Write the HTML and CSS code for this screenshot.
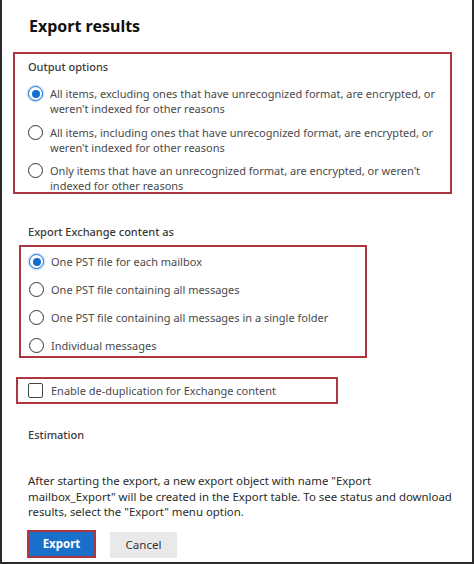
FILE: index.html
```html
<!DOCTYPE html>
<html lang="en">
<head>
<meta charset="utf-8">
<title>Export results</title>
<link rel="stylesheet" href="styles.css">
</head>
<body>
<div class="frame">
  <h1 class="title">Export results</h1>

  <div class="box box-output">
    <div class="group-label">Output options</div>
    <div class="radio-list-wrap">
      <label class="radio-item">
        <span class="radio checked"></span>
        <span class="radio-text">All items, excluding ones that have unrecognized format, are encrypted, or weren't indexed for other reasons</span>
      </label>
      <label class="radio-item">
        <span class="radio"></span>
        <span class="radio-text">All items, including ones that have unrecognized format, are encrypted, or weren't indexed for other reasons</span>
      </label>
      <label class="radio-item">
        <span class="radio"></span>
        <span class="radio-text">Only items that have an unrecognized format, are encrypted, or weren't indexed for other reasons</span>
      </label>
    </div>
  </div>

  <div class="group-label label-exchange">Export Exchange content as</div>
  <div class="box box-exchange">
    <label class="radio-row">
      <span class="radio checked"></span>
      <span class="radio-text">One PST file for each mailbox</span>
    </label>
    <label class="radio-row">
      <span class="radio"></span>
      <span class="radio-text">One PST file containing all messages</span>
    </label>
    <label class="radio-row">
      <span class="radio"></span>
      <span class="radio-text">One PST file containing all messages in a single folder</span>
    </label>
    <label class="radio-row">
      <span class="radio"></span>
      <span class="radio-text">Individual messages</span>
    </label>
  </div>

  <div class="box box-dedup">
    <span class="checkbox"></span>
    <span class="check-text">Enable de-duplication for Exchange content</span>
  </div>

  <div class="group-label label-estimation">Estimation</div>

  <p class="info">After starting the export, a new export object with name "Export mailbox_Export" will be created in the Export table. To see status and download results, select the "Export" menu option.</p>

  <div class="actions">
    <div class="btn-outline"><button class="btn btn-primary">Export</button></div>
    <button class="btn btn-secondary">Cancel</button>
  </div>
</div>
</body>
</html>
```

FILE: styles.css
```css
* { box-sizing: border-box; }

html, body {
  margin: 0;
  padding: 0;
  background: #ffffff;
}

.frame {
  width: 474px;
  height: 564px;
  border-left: 2px solid #2a2a2a;
  border-right: 2px solid #2a2a2a;
  border-bottom: 2px solid #2a2a2a;
  background: #ffffff;
  font-family: "Noto Sans", "Open Sans", sans-serif;
  color: #444444;
  overflow: hidden;
  display: flex;
  flex-direction: column;
}

.title {
  margin: 15px 0 0 27px;
  font-size: 16px;
  line-height: 22px;
  font-weight: 700;
  color: #111111;
}

.box {
  border: 2px solid #ad3640;
}

.box-output {
  margin: 15px 0 0 11px;
  width: 439px;
  height: 142px;
  padding: 5px 0 0 13px;
}

.group-label {
  font-size: 11px;
  line-height: 16px;
  color: #3a3a3a;
  font-weight: 500;
}

.radio-list-wrap {
  display: flex;
  flex-direction: column;
  gap: 8.5px;
  margin-top: 11px;
}

.radio-item {
  display: flex;
  align-items: flex-start;
  gap: 7px;
}

.radio {
  flex: none;
  width: 15px;
  height: 15px;
  border-radius: 50%;
  border: 1px solid #333333;
  background: #ffffff;
  position: relative;
}

.radio.checked {
  border: 1.5px solid #1170cf;
  box-shadow: 0 0 0 1.5px #d3e5f7;
}

.radio.checked::after {
  content: "";
  position: absolute;
  left: 50%;
  top: 50%;
  width: 8px;
  height: 8px;
  margin: -4px 0 0 -4px;
  border-radius: 50%;
  background: #1170cf;
}

.radio-text {
  font-size: 11px;
  line-height: 15px;
  color: #4a4a4a;
}

.label-exchange {
  margin: 30px 0 0 26px;
}

.box-exchange {
  margin: 5px 0 0 17px;
  width: 348px;
  height: 113px;
  padding: 7px 0 0 8px;
  display: flex;
  flex-direction: column;
  gap: 13px;
}

.radio-row {
  display: flex;
  align-items: center;
  gap: 7px;
  height: 15px;
}

.box-dedup {
  margin: 19px 0 0 14px;
  width: 322px;
  height: 27px;
  padding: 0 0 0 10px;
  display: flex;
  align-items: center;
  gap: 8px;
}

.checkbox {
  flex: none;
  width: 15px;
  height: 15px;
  border: 1px solid #444444;
  border-radius: 2px;
  background: #ffffff;
}

.check-text {
  font-size: 11px;
  line-height: 15px;
  color: #4a4a4a;
}

.label-estimation {
  margin: 23px 0 0 26px;
}

.info {
  margin: 30px 18px 0 26px;
  font-size: 11.4px;
  line-height: 15.5px;
  color: #2a2a2a;
}

.actions {
  margin: 10px 0 0 25px;
  display: flex;
  align-items: flex-end;
  gap: 14px;
}

.btn-outline {
  border: 2px solid #ad3640;
  width: 69px;
  height: 28px;
  padding: 0;
  display: flex;
}

.btn {
  font-family: "Noto Sans", "Open Sans", sans-serif;
  font-size: 11.5px;
  border: none;
  margin: 0;
  padding: 0;
  cursor: pointer;
}

.btn-primary {
  flex: 1;
  background: #1a6fcb;
  color: #ffffff;
  font-weight: 700;
}

.btn-secondary {
  width: 67px;
  height: 26px;
  background: #e9e9e9;
  color: #333333;
}
```
